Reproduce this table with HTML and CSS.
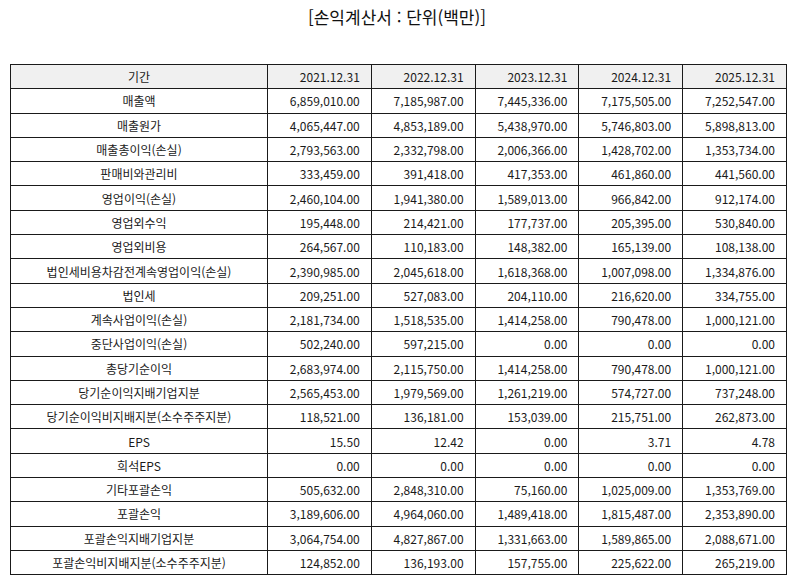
FILE: index.html
```html
<!DOCTYPE html>
<html lang="ko">
<head>
<meta charset="utf-8">
<link rel="stylesheet" href="styles.css">
</head>
<body>
<div class="page">
  <h1 class="title">[손익계산서 : 단위(백만)]</h1>
  <table class="fin">
    <colgroup>
      <col class="c-label"><col class="c-num"><col class="c-num"><col class="c-num"><col class="c-num"><col class="c-num">
    </colgroup>
    <thead>
      <tr><th class="lbl">기간</th><th>2021.12.31</th><th>2022.12.31</th><th>2023.12.31</th><th>2024.12.31</th><th>2025.12.31</th></tr>
    </thead>
    <tbody>
      <tr><td class="lbl">매출액</td><td>6,859,010.00</td><td>7,185,987.00</td><td>7,445,336.00</td><td>7,175,505.00</td><td>7,252,547.00</td></tr>
      <tr><td class="lbl">매출원가</td><td>4,065,447.00</td><td>4,853,189.00</td><td>5,438,970.00</td><td>5,746,803.00</td><td>5,898,813.00</td></tr>
      <tr><td class="lbl">매출총이익(손실)</td><td>2,793,563.00</td><td>2,332,798.00</td><td>2,006,366.00</td><td>1,428,702.00</td><td>1,353,734.00</td></tr>
      <tr><td class="lbl">판매비와관리비</td><td>333,459.00</td><td>391,418.00</td><td>417,353.00</td><td>461,860.00</td><td>441,560.00</td></tr>
      <tr><td class="lbl">영업이익(손실)</td><td>2,460,104.00</td><td>1,941,380.00</td><td>1,589,013.00</td><td>966,842.00</td><td>912,174.00</td></tr>
      <tr><td class="lbl">영업외수익</td><td>195,448.00</td><td>214,421.00</td><td>177,737.00</td><td>205,395.00</td><td>530,840.00</td></tr>
      <tr><td class="lbl">영업외비용</td><td>264,567.00</td><td>110,183.00</td><td>148,382.00</td><td>165,139.00</td><td>108,138.00</td></tr>
      <tr><td class="lbl">법인세비용차감전계속영업이익(손실)</td><td>2,390,985.00</td><td>2,045,618.00</td><td>1,618,368.00</td><td>1,007,098.00</td><td>1,334,876.00</td></tr>
      <tr><td class="lbl">법인세</td><td>209,251.00</td><td>527,083.00</td><td>204,110.00</td><td>216,620.00</td><td>334,755.00</td></tr>
      <tr><td class="lbl">계속사업이익(손실)</td><td>2,181,734.00</td><td>1,518,535.00</td><td>1,414,258.00</td><td>790,478.00</td><td>1,000,121.00</td></tr>
      <tr><td class="lbl">중단사업이익(손실)</td><td>502,240.00</td><td>597,215.00</td><td>0.00</td><td>0.00</td><td>0.00</td></tr>
      <tr><td class="lbl">총당기순이익</td><td>2,683,974.00</td><td>2,115,750.00</td><td>1,414,258.00</td><td>790,478.00</td><td>1,000,121.00</td></tr>
      <tr><td class="lbl">당기순이익지배기업지분</td><td>2,565,453.00</td><td>1,979,569.00</td><td>1,261,219.00</td><td>574,727.00</td><td>737,248.00</td></tr>
      <tr><td class="lbl">당기순이익비지배지분(소수주주지분)</td><td>118,521.00</td><td>136,181.00</td><td>153,039.00</td><td>215,751.00</td><td>262,873.00</td></tr>
      <tr><td class="lbl">EPS</td><td>15.50</td><td>12.42</td><td>0.00</td><td>3.71</td><td>4.78</td></tr>
      <tr><td class="lbl">희석EPS</td><td>0.00</td><td>0.00</td><td>0.00</td><td>0.00</td><td>0.00</td></tr>
      <tr><td class="lbl">기타포괄손익</td><td>505,632.00</td><td>2,848,310.00</td><td>75,160.00</td><td>1,025,009.00</td><td>1,353,769.00</td></tr>
      <tr><td class="lbl">포괄손익</td><td>3,189,606.00</td><td>4,964,060.00</td><td>1,489,418.00</td><td>1,815,487.00</td><td>2,353,890.00</td></tr>
      <tr><td class="lbl">포괄손익지배기업지분</td><td>3,064,754.00</td><td>4,827,867.00</td><td>1,331,663.00</td><td>1,589,865.00</td><td>2,088,671.00</td></tr>
      <tr><td class="lbl">포괄손익비지배지분(소수주주지분)</td><td>124,852.00</td><td>136,193.00</td><td>157,755.00</td><td>225,622.00</td><td>265,219.00</td></tr>
    </tbody>
  </table>
</div>
</body>
</html>
```

FILE: styles.css
```css
html, body {
  margin: 0;
  padding: 0;
  background: #ffffff;
}
body {
  font-family: "Noto Sans CJK KR", "Noto Sans", sans-serif;
  color: #1a1a1a;
}
.page {
  padding: 0 10px;
}
.title {
  margin: 0;
  padding-top: 5px;
  height: 64px;
  box-sizing: border-box;
  text-align: center;
  font-weight: normal;
  font-size: 17px;
  line-height: 23px;
  color: #111111;
}
.fin {
  width: 776px;
  border-collapse: collapse;
  table-layout: fixed;
  font-size: 12px;
}
.c-label { width: 257px; }
.c-num { width: 103.8px; }
.fin th, .fin td {
  border: 1px solid #1a1a1a;
  height: 24.3px;
  padding: 0 11px 0 4px;
  box-sizing: border-box;
  text-align: right;
  font-weight: normal;
  line-height: 15px;
  white-space: nowrap;
}
.fin th {
  background: #f0f0f0;
}
.fin .lbl {
  text-align: center;
  padding: 0 4px;
}
```
